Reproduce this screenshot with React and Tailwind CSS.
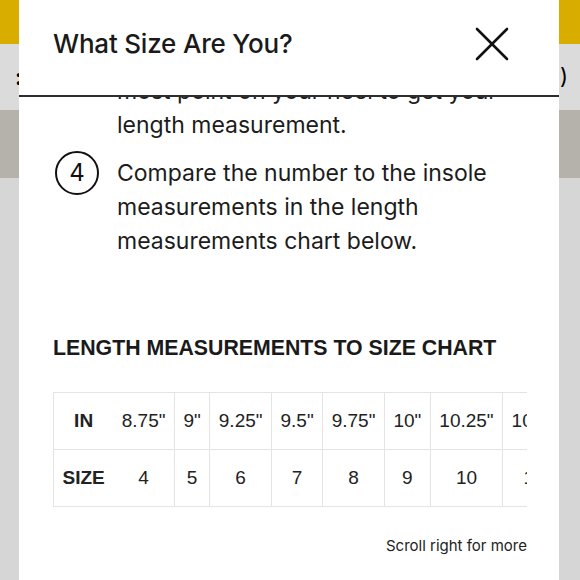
import React from 'react';

const inches = ['8.75"', '9"', '9.25"', '9.5"', '9.75"', '10"', '10.25"', '10.5"', '11"', '11.5"'];
const sizes = ['4', '5', '6', '7', '8', '9', '10', '11', '12', '13'];

const Step = ({ num, children }) => (
  <div className="flex items-start gap-[18px]">
    <div className="ml-[2px] -mt-[5px] w-11 h-11 shrink-0 rounded-full border-[2.5px] border-[#111] flex items-center justify-center text-[24px] leading-none text-[#111]">
      {num}
    </div>
    <p className="w-[400px] text-[23px] leading-[34px] text-[#1c1c1c]">{children}</p>
  </div>
);

const App = () => {
  return (
    <div className="relative w-[580px] h-[580px] overflow-hidden bg-[#d6d6d6] font-['Inter',sans-serif]">
      {/* page behind the dialog */}
      <div className="h-[44px] bg-[#d9ac00]"></div>
      <div className="h-[66px] bg-[#dbdbdb] flex items-center justify-between">
        <div className="pl-[15px] text-[22px] font-bold text-black">:</div>
        <div className="pr-[12px] text-[22px] text-black whitespace-nowrap">Bag (0)</div>
      </div>
      <div className="h-[68px] bg-[#b5b2ac]"></div>

      {/* dialog */}
      <div className="absolute left-[19px] top-0 w-[540px] h-[580px] bg-white flex flex-col">
        <div className="h-[97px] shrink-0 flex items-center justify-between pl-[34px] pr-[50px] pb-[8px] border-b-2 border-[#2e2e2e]">
          <h1 className="text-[26px] font-medium text-[#1a1a1a] tracking-[-0.2px]">What Size Are You?</h1>
          <button className="w-[34px] h-[34px] flex items-center justify-center">
            <svg width="34" height="34" viewBox="0 0 34 34" fill="none" stroke="#111" strokeWidth="2.6" strokeLinecap="round">
              <line x1="2" y1="2" x2="32" y2="32" />
              <line x1="32" y1="2" x2="2" y2="32" />
            </svg>
          </button>
        </div>

        <div className="flex-1 overflow-hidden px-[34px]">
          <div className="h-[45px] overflow-hidden flex flex-col justify-end">
            <Step num="3">
              Stand up and measure from the back of your heel to the front-<br />most point on your heel to get your<br />length measurement.
            </Step>
          </div>

          <div className="mt-[14px]">
            <Step num="4">Compare the number to the insole measurements in the length measurements chart below.</Step>
          </div>

          <h2 className="mt-[76px] font-['Liberation_Sans',Arial,sans-serif] font-bold text-[21.3px] leading-[28px] text-[#1a1a1a]">
            LENGTH MEASUREMENTS TO SIZE CHART
          </h2>

          <div className="mt-[30px] overflow-hidden w-[474px]">
            <table className="border-collapse font-['Liberation_Sans',Arial,sans-serif] text-[19px] text-[#222] whitespace-nowrap">
              <tbody>
                <tr className="h-[57px]">
                  <th className="px-[8.5px] font-bold border-y border-l border-[#e4e4e4]">IN</th>
                  {inches.map(v => (
                    <td key={v} className="px-[8.5px] text-center border-y border-r border-[#e4e4e4]">{v}</td>
                  ))}
                </tr>
                <tr className="h-[57px]">
                  <th className="px-[8.5px] font-bold border-y border-l border-[#e4e4e4]">SIZE</th>
                  {sizes.map(v => (
                    <td key={v} className="px-[8.5px] text-center border-y border-r border-[#e4e4e4]">{v}</td>
                  ))}
                </tr>
              </tbody>
            </table>
          </div>

          <p className="mt-[27px] w-[474px] text-right text-[15px] leading-[24px] text-[#222]">Scroll right for more</p>
        </div>
      </div>
    </div>
  );
};

export default App;
